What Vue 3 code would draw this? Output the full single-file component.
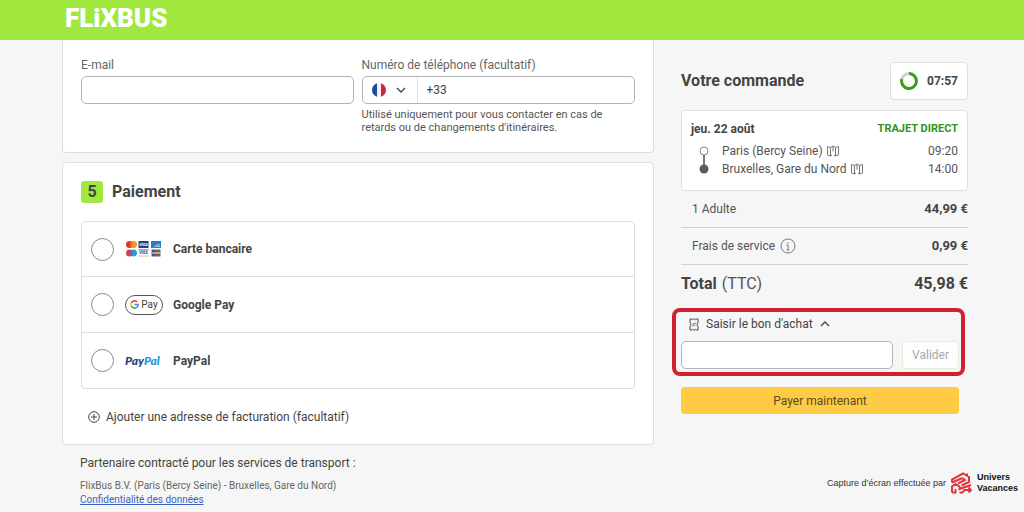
<script setup>
import { ref } from 'vue'

const email = ref('')
const phone = ref('+33')
const country = ref('FR')
const method = ref('')
const voucher = ref('')
const voucherOpen = ref(true)

const methods = [
  { id: 'card', label: 'Carte bancaire' },
  { id: 'gpay', label: 'Google Pay' },
  { id: 'paypal', label: 'PayPal' },
]
const stops = [
  { name: 'Paris (Bercy Seine)', time: '09:20' },
  { name: 'Bruxelles, Gare du Nord', time: '14:00' },
]
</script>

<template>
  <div class="page">
    <header class="topbar">
      <a class="brand" href="#" aria-label="FlixBus">FLiXBUS</a>
    </header>

    <div class="columns">
      <main class="main">
        <section class="card contact">
          <div class="field">
            <label for="email">E-mail</label>
            <input id="email" v-model="email" class="box" type="email" />
          </div>
          <div class="field">
            <label for="phone">Numéro de téléphone (facultatif)</label>
            <div class="box phone">
              <div class="country">
                <svg class="flag" viewBox="0 0 14 14" aria-hidden="true">
                  <clipPath id="round"><circle cx="7" cy="7" r="7" /></clipPath>
                  <g clip-path="url(#round)">
                    <rect width="14" height="14" fill="#f4f4f6" />
                    <rect width="5" height="14" fill="#1d4b9e" />
                    <rect x="9" width="5" height="14" fill="#d4213d" />
                  </g>
                </svg>
                <svg class="chevron" viewBox="0 0 10 10" aria-hidden="true"><path d="M1 3l4 4 4-4" /></svg>
                <select v-model="country" aria-label="Indicatif du pays">
                  <option value="FR">France</option>
                  <option value="BE">Belgique</option>
                </select>
              </div>
              <input id="phone" v-model="phone" type="tel" />
            </div>
            <p class="hint">Utilisé uniquement pour vous contacter en cas de retards ou de changements d'itinéraires.</p>
          </div>
        </section>

        <section class="card payment">
          <h2><span class="step">5</span>Paiement</h2>
          <div class="methods">
            <label v-for="m in methods" :key="m.id" class="method">
              <input v-model="method" type="radio" name="method" :value="m.id" />
              <span class="logo" aria-hidden="true">
                <svg v-if="m.id === 'card'" class="cards" viewBox="0 0 36 16">
                  <circle cx="3.5" cy="3.5" r="3.5" fill="#e0322c" />
                  <circle cx="7.5" cy="3.5" r="3.5" fill="#f59a23" />
                  <path d="M5.5 .7a3.5 3.5 0 0 1 0 5.6a3.5 3.5 0 0 1 0-5.6z" fill="#f06a25" />
                  <circle cx="3.5" cy="12" r="3.5" fill="#e0384a" />
                  <circle cx="7.5" cy="12" r="3.5" fill="#2a9be0" />
                  <path d="M5.5 9.2a3.5 3.5 0 0 1 0 5.6a3.5 3.5 0 0 1 0-5.6z" fill="#6a62b8" />
                  <rect x="12.5" width="10" height="7" fill="#233f86" />
                  <text x="17.5" y="5.2" fill="#fff">VISA</text>
                  <rect x="12.5" y="8.5" width="10" height="1" fill="#4460a8" />
                  <text x="17.5" y="13.4" fill="#25408a">VISA</text>
                  <rect x="12.5" y="14.5" width="10" height="1" fill="#f0b878" />
                  <rect x="25" width="10" height="7" fill="#2f7ac8" />
                  <path d="M28 6.2l3-2.4h3M30.500 5.500h3.500" stroke="#b9d8f2" fill="none" stroke-width=".9" />
                  <rect x="25.500" y="8.500" width="9" height="7" fill="#69697f" />
                  <rect x="26.200" y="9" width="2.200" height="6" rx="1" fill="#27508f" />
                  <rect x="28.900" y="9" width="2.200" height="6" rx="1" fill="#c8324a" />
                  <rect x="31.600" y="9" width="2.200" height="6" rx="1" fill="#3e7b4d" />
                  <path d="M26 12h8" stroke="#eee" stroke-width="1" />
                </svg>
                <span v-else-if="m.id === 'gpay'" class="gpay">
                  <svg viewBox="0 0 10 10">
                    <g fill="none" stroke-width="1.7">
                      <path d="M7.900 2.100A4 4 0 0 0 1.500 3.100" stroke="#e94335" />
                      <path d="M1.500 3.100a4 4 0 0 0 0 3.800" stroke="#fabb05" />
                      <path d="M1.500 6.900a4 4 0 0 0 6.200 1.100" stroke="#34a853" />
                      <path d="M7.700 8A4 4 0 0 0 9 5.100H5" stroke="#4285f4" />
                    </g>
                  </svg>Pay
                </span>
                <span v-else class="paypal">Pay<i>Pal</i></span>
              </span>
              <span>{{ m.label }}</span>
            </label>
          </div>
          <button class="billing" type="button">
            <svg viewBox="0 0 12 12" aria-hidden="true">
              <circle cx="6" cy="6" r="5.300" /><path d="M6 3v6M3 6h6" />
            </svg>
            Ajouter une adresse de facturation (facultatif)
          </button>
        </section>

        <footer class="legal">
          <h3>Partenaire contracté pour les services de transport :</h3>
          <p>FlixBus B.V. (Paris (Bercy Seine) - Bruxelles, Gare du Nord)</p>
          <a href="#">Confidentialité des données</a>
        </footer>
      </main>

      <aside class="order">
        <div class="order-head">
          <h2>Votre commande</h2>
          <div class="timer">
            <svg viewBox="0 0 20 20" aria-hidden="true">
              <circle cx="10" cy="10" r="7.500" stroke="#cfcfcf" />
              <path d="M10 2.500A7.500 7.500 0 1 1 2.700 8.200" stroke="#36a01c" />
            </svg>
            07:57
          </div>
        </div>

        <div class="trip">
          <div class="trip-head"><span>jeu. 22 août</span><strong>TRAJET DIRECT</strong></div>
          <div class="trip-body">
            <svg class="line" viewBox="0 0 10 28" aria-hidden="true">
              <path d="M5 9v12" stroke="#777" stroke-width="2" />
              <circle cx="5" cy="5" r="4" fill="#fff" stroke="#888" />
              <circle cx="5" cy="23" r="4.500" fill="#5b5b5b" />
            </svg>
            <ul>
              <li v-for="s in stops" :key="s.name">
                <span class="stop">{{ s.name }}
                  <svg class="map" viewBox="0 0 12 12" aria-hidden="true">
                    <path d="M.5 1.500L3.500 2.500v8.500L.5 10zM3.500 2.500L6 1M8.500 2.500l3-1V10l-3 1zM8.500 2.500L6 1v5.500M3.500 11L5 10M8.500 11L7 10" />
                  </svg>
                </span>
                <time>{{ s.time }}</time>
              </li>
            </ul>
          </div>
        </div>

        <dl class="prices">
          <div><dt>1 Adulte</dt><dd>44,99 €</dd></div>
          <div>
            <dt>Frais de service
              <svg viewBox="0 0 16 16" aria-hidden="true">
                <circle cx="8" cy="8" r="7" /><path d="M8 7v5M6.500 7H8M6.500 12h3M8 4v1.500" />
              </svg>
            </dt>
            <dd>0,99 €</dd>
          </div>
          <div class="total"><dt><b>Total</b> (TTC)</dt><dd>45,98 €</dd></div>
        </dl>

        <div class="actions">
          <form class="voucher" @submit.prevent>
            <button class="toggle" type="button" :aria-expanded="voucherOpen" @click="voucherOpen = !voucherOpen">
              <svg class="ticket" viewBox="0 0 10 13" aria-hidden="true">
                <path d="M1 1h1.500l.8.700.9-.7h1.600l.9.700.8-.7H9v3.700l-.7.800v2l.7.800V12H7.500l-.8-.7-.9.700H4.200l-.9-.7-.8.700H1V8.300l.7-.8v-2L1 4.700z" />
                <path d="M3.300 8.300l3.400-3.600M3.500 4.800l.8.800M5.800 7.400l.8.800" />
              </svg>
              Saisir le bon d'achat
              <svg class="chevron" viewBox="0 0 10 10" aria-hidden="true"><path d="M1 7l4-4 4 4" /></svg>
            </button>
            <div v-if="voucherOpen" class="voucher-row">
              <input v-model="voucher" class="box" type="text" aria-label="Bon d'achat" />
              <button class="validate" type="submit" disabled>Valider</button>
            </div>
          </form>
          <button class="pay" type="button">Payer maintenant</button>
        </div>
      </aside>
    </div>

    <div class="credit">
      <span>Capture d’écran effectuée par</span>
      <svg viewBox="0 0 22 22" aria-hidden="true">
        <path d="M1.500 10.500V7.500L12.500 1.500 18.500 5v5L11 13.500M16.500 4V1.500M1.500 10.500L12 6M12 6l2.500 2-7 3.500" />
        <path d="M1.500 20.500v-6L5 12l4 2.500v2.500l11.500-4M1.500 20.500h3.500V17M9 20.500h3l2-2.500h7M18 15.500l2.500 2.500-2.500 2.500" />
      </svg>
      <b>Univers<br />Vacances</b>
    </div>
  </div>
</template>

<style>
body {
  margin: 0;
  background: #f6f6f6;
}
</style>

<style scoped>
* {
  box-sizing: border-box;
}
.page {
  position: relative;
  min-height: 100vh;
  background: #f6f6f6;
  color: #444;
  font: 12px/18px Roboto, "Liberation Sans", sans-serif;
}
h2, h3, p, ul, dl, dd {
  margin: 0;
  padding: 0;
}
button, input {
  font: inherit;
  color: inherit;
}
svg {
  flex: none;
}
.topbar {
  display: flex;
  align-items: center;
  height: 40px;
  padding: 0 65px 4px;
  background: #a0e83e;
}
.brand {
  color: #fff;
  font-size: 26px;
  line-height: 36px;
  font-weight: 900;
  text-decoration: none;
}
.columns {
  display: grid;
  grid-template-columns: minmax(0, 592fr) minmax(0, 287fr);
  gap: 27px;
  padding: 0 56px 0 62px;
}
.card {
  background: #fff;
  border: 1px solid #dedede;
  border-radius: 4px;
}
.contact {
  display: grid;
  grid-template-columns: 273fr 274fr;
  gap: 8px;
  padding: 16px 18px 18px;
  border-top: 0;
  border-radius: 0 0 4px 4px;
}
.field label {
  display: block;
  margin-bottom: 2px;
  color: #666;
}
.box {
  display: block;
  width: 100%;
  height: 28px;
  padding: 0 8px;
  background: #fff;
  border: 1px solid #b4b4b4;
  border-radius: 5px;
}
.phone {
  display: flex;
  padding: 0;
}
.phone input {
  flex: 1;
  min-width: 0;
  padding: 0 9px;
  border: 0;
  background: none;
}
.country {
  position: relative;
  display: flex;
  align-items: center;
  gap: 10px;
  padding: 0 11px 0 9px;
  border-right: 1px solid #ddd;
}
.country select {
  position: absolute;
  inset: 0;
  width: 100%;
  opacity: 0;
}
.flag {
  width: 14px;
  height: 14px;
}
.chevron {
  width: 10px;
  height: 10px;
  fill: none;
  stroke: #444;
  stroke-width: 1.3;
}
.hint {
  margin-top: 4px;
  font-size: 11px;
  line-height: 13px;
  color: #555;
}
.payment {
  margin-top: 9px;
  padding: 18px;
}
.payment h2 {
  display: flex;
  align-items: center;
  gap: 9px;
  font-size: 16px;
  line-height: 22px;
}
.step {
  width: 22px;
  border-radius: 3px;
  background: #a0e83e;
  text-align: center;
}
.methods {
  margin-top: 18px;
  border: 1px solid #dedede;
  border-radius: 4px;
}
.method {
  display: flex;
  align-items: center;
  height: 54px;
  padding-left: 9px;
  font-weight: 700;
}
.method + .method {
  height: 56px;
  border-top: 1px solid #dedede;
}
.method input {
  appearance: none;
  width: 23px;
  height: 23px;
  margin: 0 11px 0 0;
  border: 1px solid #888;
  border-radius: 50%;
  background: #fff;
}
.method input:checked {
  border: 7px solid #36a01c;
}
.logo {
  display: flex;
  width: 48px;
}
.cards {
  width: 36px;
  height: 16px;
  margin-left: 1px;
}
.cards text {
  font: italic 700 4px Roboto, sans-serif;
  text-anchor: middle;
}
.gpay {
  display: flex;
  align-items: center;
  justify-content: center;
  gap: 2px;
  width: 38px;
  height: 20px;
  border: 1px solid #555;
  border-radius: 10px;
  font-size: 10px;
  font-weight: 400;
}
.gpay svg {
  width: 9px;
  height: 9px;
}
.paypal {
  color: #253b80;
  font: italic 900 12px/16px Lato, sans-serif;
}
.paypal i {
  color: #179bd7;
}
.billing {
  display: flex;
  align-items: center;
  gap: 6px;
  margin-top: 19px;
  padding: 0 7px;
  border: 0;
  background: none;
}
.billing svg {
  width: 12px;
  height: 12px;
  fill: none;
  stroke: #444;
}
.legal {
  padding: 9px 18px 5px;
  font-size: 10px;
  line-height: 14px;
  color: #666;
}
.legal h3 {
  margin-bottom: 7px;
  font-size: 12px;
  line-height: 18px;
  font-weight: 400;
  color: #444;
}
.legal a {
  color: #3a5fc4;
}
.order-head {
  display: flex;
  align-items: center;
  justify-content: space-between;
  margin-top: 22px;
}
.order-head h2 {
  font-size: 16px;
  line-height: 20px;
}
.timer {
  display: flex;
  align-items: center;
  gap: 8px;
  height: 38px;
  padding: 0 9px 0 8px;
  background: #fff;
  border: 1px solid #dedede;
  border-radius: 4px;
  font-weight: 700;
}
.timer svg {
  width: 20px;
  height: 20px;
  fill: none;
  stroke-width: 3;
}
.trip {
  margin-top: 10px;
  padding: 9px 9px 12px;
  background: #fff;
  border: 1px solid #dedede;
  border-radius: 4px;
}
.trip-head {
  display: flex;
  justify-content: space-between;
  margin-bottom: 4px;
  font-weight: 700;
}
.trip-head strong {
  color: #2f9414;
  font-size: 11px;
  font-weight: 700;
}
.trip-body {
  display: flex;
  align-items: center;
  gap: 13px;
  padding-left: 8px;
}
.line {
  width: 10px;
  height: 28px;
}
.trip-body ul {
  flex: 1;
  list-style: none;
}
.trip-body li {
  display: flex;
  justify-content: space-between;
  color: #555;
}
.stop {
  display: flex;
  align-items: center;
  gap: 4px;
}
.map {
  width: 12px;
  height: 12px;
  fill: none;
  stroke: #777;
}
.prices > div {
  display: flex;
  align-items: center;
  justify-content: space-between;
  height: 37px;
  border-bottom: 1px solid #d2d2d2;
}
.prices dt {
  display: flex;
  align-items: center;
  gap: 5px;
  padding-left: 11px;
  color: #555;
}
.prices dt svg {
  width: 16px;
  height: 16px;
  fill: none;
  stroke: #777;
}
.prices dd {
  font-size: 13px;
  font-weight: 700;
}
.prices .total {
  border: 0;
}
.prices .total dt {
  padding: 0;
  font-size: 16px;
}
.prices .total dd {
  font-size: 16px;
}
.total b {
  color: #444;
}
.actions {
  padding-right: 9px;
}
.voucher {
  position: relative;
  margin-top: 13px;
}
.voucher::after {
  content: "";
  position: absolute;
  inset: -7px -6px -7px -9px;
  border: 4px solid #cf2230;
  border-radius: 8px;
  pointer-events: none;
}
.toggle {
  display: flex;
  align-items: center;
  gap: 7px;
  padding: 0 8px;
  border: 0;
  background: none;
}
.ticket {
  width: 10px;
  height: 13px;
  fill: none;
  stroke: #444;
}
.voucher-row {
  display: flex;
  gap: 9px;
  margin-top: 8px;
}
.voucher-row .box {
  flex: 1;
  min-width: 0;
}
.validate {
  padding: 0 9px;
  border: 1px solid #e6efd6;
  border-radius: 4px;
  background: #fdfdfd;
  color: #aaa;
}
.pay {
  display: block;
  width: 100%;
  height: 27px;
  margin-top: 18px;
  padding: 0;
  border: 0;
  border-radius: 4px;
  background: #ffcb44;
  color: #5a4a22;
}
.credit {
  position: absolute;
  right: 6px;
  bottom: 18px;
  display: flex;
  align-items: center;
  gap: 4px;
  color: #333;
  font: 9px/11px "Liberation Sans", sans-serif;
}
.credit svg {
  width: 23px;
  height: 22px;
  fill: none;
  stroke: #e0353b;
  stroke-width: 2;
}
.credit b {
  color: #111;
}
</style>
